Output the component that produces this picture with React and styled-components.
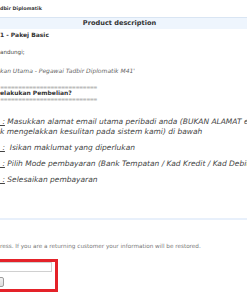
import React from 'react'
import styled, { createGlobalStyle } from 'styled-components'

const GlobalStyle = createGlobalStyle`
    html, body {
        margin: 0;
        padding: 0;
        background: #ffffff;
        overflow: hidden;
    }
    body {
        font-family: "DejaVu Sans", Verdana, sans-serif;
        color: #333333;
    }
`;

const steps = [
    { n: 1, lines: ['Masukkan alamat email utama peribadi anda (BUKAN ALAMAT email', 'k mengelakkan kesulitan pada sistem kami) di bawah'] },
    { n: 2, lines: [' Isikan maklumat yang diperlukan'] },
    { n: 3, lines: ['Pilih Mode pembayaran (Bank Tempatan / Kad Kredit / Kad Debit)'] },
    { n: 4, lines: ['Selesaikan pembayaran'] },
]

function App() {
    return (
        <>
            <GlobalStyle />
            <Page>
                <Crumb>dbir Diplomatik</Crumb>
                <SectionBar>Product description</SectionBar>
                <Title>1 - Pakej Basic</Title>
                <Plain>andungi;</Plain>
                <Note>kan Utama - Pegawai Tadbir Diplomatik M41'</Note>
                <Banner>
                    <Rule>===========================</Rule>
                    <BannerTitle>elakukan Pembelian?</BannerTitle>
                    <Rule>===========================</Rule>
                </Banner>
                <Steps>
                    {steps.map(step => (
                        <Step key={step.n}>
                            {step.lines.map((line, i) => (
                                <div key={i}>
                                    {i === 0 && <StepLabel>{'\u00a0:'}</StepLabel>}
                                    {i === 0 ? '\u00a0' + line : line}
                                </div>
                            ))}
                        </Step>
                    ))}
                </Steps>
                <Divider />
                <Hint>ress. If you are a returning customer your information will be restored.</Hint>
                <Highlight>
                    <EmailInput type="text" />
                    <GoButton type="button" />
                </Highlight>
            </Page>
        </>
    )
}

const Page = styled.div`
    width: 247px;
    height: 296px;
    overflow: hidden;
`;

const Crumb = styled.div`
    height: 17px;
    line-height: 18px;
    font-size: 4.8px;
    font-weight: bold;
    color: #3a3a3a;
    white-space: nowrap;
`;

const SectionBar = styled.div`
    height: 11px;
    line-height: 11px;
    border-top: 1px solid #d9e5f3;
    background: #eef5fd;
    padding-right: 8px;
    text-align: center;
    font-size: 6.6px;
    font-weight: bold;
    color: #333333;
`;

const Title = styled.div`
    height: 11px;
    line-height: 11px;
    font-size: 6px;
    font-weight: bold;
    color: #333333;
    white-space: nowrap;
`;

const Plain = styled.div`
    margin-top: 6px;
    height: 12px;
    line-height: 12px;
    font-size: 5.6px;
    color: #444444;
    white-space: nowrap;
`;

const Note = styled.div`
    margin-top: 7px;
    height: 12px;
    line-height: 12px;
    font-size: 6px;
    font-style: italic;
    color: #666666;
    white-space: nowrap;
`;

const Banner = styled.div`
    margin-top: 6.6px;
    line-height: 6.2px;
    white-space: nowrap;
`;

const Rule = styled.div`
    font-size: 5px;
    letter-spacing: -0.6px;
    color: #8a8a8a;
`;

const BannerTitle = styled.div`
    font-size: 6px;
    font-weight: bold;
    color: #333333;
`;

const Steps = styled.div`
    margin-top: 14.8px;
    display: flex;
    flex-direction: column;
    gap: 6px;
`;

const Step = styled.div`
    line-height: 10px;
    font-size: 7.5px;
    font-style: italic;
    color: #444444;
    white-space: nowrap;
`;

const StepLabel = styled.span`
    text-decoration: underline;
`;

const Divider = styled.div`
    margin-top: 33px;
    height: 2px;
    background: #e8f0fb;
`;

const Hint = styled.div`
    margin-top: 21px;
    height: 10px;
    line-height: 10px;
    font-size: 5.7px;
    color: #777777;
    white-space: nowrap;
`;

const Highlight = styled.div`
    margin-top: 8px;
    margin-left: -20px;
    width: 78px;
    box-sizing: border-box;
    border: 3px solid #e42229;
    padding: 0 9px 2px 4px;
    display: flex;
    flex-direction: column;
    align-items: flex-start;
    gap: 5px;
`;

const EmailInput = styled.input`
    box-sizing: border-box;
    width: 65px;
    height: 10px;
    margin: 0;
    padding: 0;
    border: 1px solid #d0d0d0;
    background: #ffffff;
    outline: none;
`;

const GoButton = styled.button`
    box-sizing: border-box;
    width: 17px;
    height: 10px;
    margin: 0;
    padding: 0;
    border: 1px solid #9c9c9c;
    border-radius: 2px;
    background: linear-gradient(#f2f2f2, #dcdcdc);
`;

export default App
